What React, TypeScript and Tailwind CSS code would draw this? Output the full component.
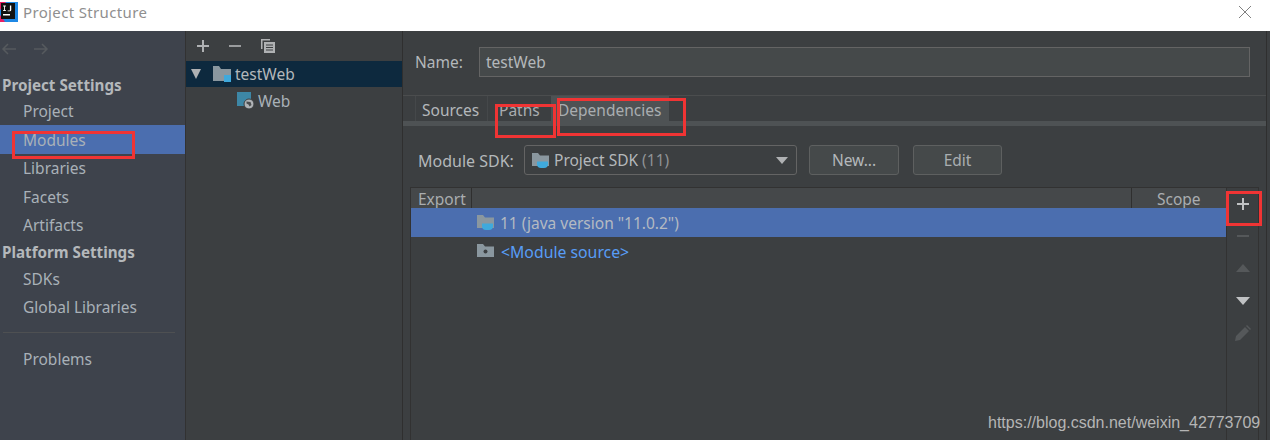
import React from 'react';

const font = { fontFamily: '"Noto Sans", "Open Sans", sans-serif' };

const FolderIcon = ({ cup, badge }: { cup?: boolean; badge?: boolean }) => (
  <svg width="20" height="19" viewBox="0 0 20 19" className="shrink-0">
    <path d="M1 2h6l2 2.500h9V15H1z" fill="#8a979f" />
    {cup && <path d="M6 10.500h11v2.500a4 4 0 0 1-4 4h-3a4 4 0 0 1-4-4z" fill="#3fa9dc" />}
    {badge && <circle cx="9.500" cy="9.500" r="2" fill="#3c3f41" />}
  </svg>
);

const SideItem = ({ label, active, first }: { label: string; active?: boolean; first?: boolean }) => (
  <div className={`h-[28.4px] pl-[23px] flex items-center text-[15.500px] text-[#a9b1b8] ${first ? '' : 'pt-[2px]'} ${active ? 'bg-[#4b6eaf]' : ''}`}>
    {label}
  </div>
);

const SideHeader = ({ label, short }: { label: string; short?: boolean }) => (
  <div className={`${short ? 'h-[25px]' : 'h-[26px]'} pl-[2px] pt-[2px] flex items-center text-[15.200px] font-bold text-[#b4b8bb]`}>{label}</div>
);

const RedBox = ({ className }: { className: string }) => (
  <div className={`absolute border-[3px] border-[#f03434] ${className}`} />
);

export default function App() {
  return (
    <div className="relative w-[1270px] h-[440px] overflow-hidden bg-white" style={font}>
      {/* title bar */}
      <div className="h-[31px] w-[1266px] flex items-center bg-white">
        <svg width="18" height="21" viewBox="0 0 18 21" className="shrink-0 -mt-[8px]">
          <rect x="0" y="1" width="18" height="20" fill="#1e88e5" />
          <path d="M0 1h6L0 9z" fill="#e91e63" />
          <path d="M0 14l5 7H0z" fill="#e91e63" />
          <rect x="1" y="2" width="14" height="16" fill="#111" />
          <rect x="3" y="13" width="7" height="1.500" fill="#fff" />
          <path d="M3 5h3v1H5v4h1v1H3v-1h1V6H3zM8 5h4v5a1.500 1.500 0 0 1-1.500 1.500H8v-1h2.500V5z" fill="#fff" transform="scale(0.9) translate(0.500 0)" />
        </svg>
        <span className="ml-[5px] -mt-[7px] text-[15px] tracking-[0.35px] text-[#8f8f8f]">Project Structure</span>
        <svg width="12" height="12" viewBox="0 0 12 12" className="ml-auto mr-[15px] -mt-[7px] text-[#808080]">
          <path d="M0 0l12 12M12 0L0 12" stroke="currentColor" strokeWidth="1" fill="none" />
        </svg>
      </div>

      <div className="flex h-[409px]">
        {/* left sidebar */}
        <div className="w-[185px] bg-[#3e434c] shrink-0 flex flex-col">
          <div className="h-[40px] pl-[1px] pt-[11px] flex gap-[16px] text-[#565a5e]">
            {[0, 1].map((i) => (
              <svg key={i} width="16" height="14" viewBox="0 0 16 14">
                <path d={i === 0 ? 'M15 7H2M7 2L2 7l5 5' : 'M1 7h13M9 2l5 5-5 5'} stroke="currentColor" strokeWidth="1.500" fill="none" />
              </svg>
            ))}
          </div>
          <SideHeader label="Project Settings" />
          <div>
            <SideItem label="Project" first />
            <SideItem label="Modules" active />
            <SideItem label="Libraries" />
            <SideItem label="Facets" />
            <SideItem label="Artifacts" />
          </div>
          <SideHeader label="Platform Settings" short />
          <div>
            <SideItem label="SDKs" />
            <SideItem label="Global Libraries" />
          </div>
          <div className="mt-[11px] ml-[3px] mr-[10px] h-px bg-[#4e5052]" />
          <div className="mt-[12px]">
            <SideItem label="Problems" />
          </div>
        </div>

        {/* module tree */}
        <div className="w-[217px] shrink-0 bg-[#3c3f41] border-l border-[#323232]">
          <div className="h-[30px] flex items-center pl-[10px] gap-[18px] text-[#afb1b3]">
            <svg width="14" height="14" viewBox="0 0 14 14">
              <path d="M7 1v12M1 7h12" stroke="currentColor" strokeWidth="2" />
            </svg>
            <svg width="14" height="14" viewBox="0 0 14 14">
              <path d="M1 7h12" stroke="#9a9c9e" strokeWidth="2" />
            </svg>
            <svg width="16" height="16" viewBox="0 0 16 16">
              <path d="M1 1h9v1.500H2.500V11H1z" fill="currentColor" />
              <path d="M4 4h11v11H4z" fill="currentColor" />
              <path d="M6 7h7M6 9.500h7M6 12h7" stroke="#3c3f41" strokeWidth="1" />
            </svg>
          </div>
          <div className="h-[26px] flex items-center bg-[#0d293e] text-[15.500px] text-[#b4b8bb]">
            <svg width="10" height="10" viewBox="0 0 10 10" className="ml-[5px]">
              <path d="M0 0h10L5 10z" fill="#afb1b3" />
            </svg>
            <svg width="19" height="17" viewBox="0 0 19 17" className="ml-[12px]">
              <path d="M0 0h6l2 3h10v12H0z" fill="#8a979f" />
              <rect x="11" y="9" width="7" height="7" fill="#3fa9dc" />
            </svg>
            <span className="ml-[3px] mt-[2px]">testWeb</span>
          </div>
          <div className="h-[27px] flex items-center text-[15.500px] text-[#a9b1b8]">
            <svg width="19" height="19" viewBox="0 0 19 19" className="ml-[50px]">
              <rect x="1" y="1" width="14" height="14" fill="#3d87a6" />
              <circle cx="13" cy="13" r="5" fill="#b0b3b6" stroke="#3c3f41" strokeWidth="1" />
              <path d="M10.500 10.500l4 .5 1 3-2 1.500-1-2-2-1z" fill="#4a4d4f" />
            </svg>
            <span className="ml-[3px] mt-[2px]">Web</span>
          </div>
        </div>

        {/* module details */}
        <div className="w-[864px] shrink-0 bg-[#3c3f41] border-l border-[#2f2f2f] flex flex-col">
          <div className="h-[64px] flex items-center pl-[12px] pr-[16px] pb-[2px]">
            <span className="w-[64px] mt-[2px] text-[15.500px] text-[#b4b8bb]">Name:</span>
            <div className="h-[30px] flex-1 bg-[#45494a] border border-[#646464] pl-[6px] pt-[2px] flex items-center text-[15.500px] text-[#b4b8bb]">
              testWeb
            </div>
          </div>
          <div className="h-[26px] border-t border-[#4b4d4e] flex items-stretch pl-[12px] pt-0 text-[15.500px] text-[#b4b8bb]">
            <div className="w-[73px] pl-[6px] pt-[4px] flex items-center border-x border-[#45484a]">Sources</div>
            <div className="w-[63px] pl-[11px] pt-[4px] flex items-center text-[#a9adb0]">Paths</div>
            <div className="w-[118px] pl-[7px] pt-[4px] flex items-center bg-[#4e5254] text-[#a9adb0]">Dependencies</div>
          </div>
          <div className="h-[5px] bg-[#4e5254]" />
          <div className="h-[61px] flex items-center pl-[15px] pt-[7px]">
            <span className="w-[106px] mt-[2px] text-[16px] text-[#b4b8bb]">Module SDK:</span>
            <div className="h-[30px] w-[273px] flex items-center pl-[6px] pr-[8px] bg-[#3c3f41] border border-[#646464] rounded-[3px] text-[15.500px] text-[#b4b8bb]">
              <FolderIcon cup />
              <span className="ml-[3px] mt-[2px]">Project SDK <span className="text-[#8f9396]">(11)</span></span>
              <svg width="12" height="7" viewBox="0 0 12 7" className="ml-auto">
                <path d="M0 0h12L6 7z" fill="#afb1b3" />
              </svg>
            </div>
            <div className="ml-[12px] h-[30px] w-[90px] pt-[2px] flex items-center justify-center bg-[#45494a] border border-[#5e6060] rounded-[3px] text-[15.500px] text-[#b4b8bb]">New...</div>
            <div className="ml-[14px] h-[30px] w-[89px] pt-[2px] flex items-center justify-center bg-[#45494a] border border-[#5e6060] rounded-[3px] text-[15.500px] text-[#a9adb0]">Edit</div>
          </div>

          <div className="flex-1 flex ml-[7px] mr-[7px] border border-b-0 border-[#323232]">
            {/* dependency table */}
            <div className="w-[815px] shrink-0 flex flex-col">
              <div className="h-[20px] flex bg-[#45484a] text-[15.500px] text-[#a9adb0]">
                <div className="w-[61px] pl-[7px] pt-[3px] flex items-center border-r border-[#2f2f2f]">Export</div>
                <div className="w-[660px] border-r border-[#2f2f2f]" />
                <div className="flex-1 pl-[25px] pt-[3px] flex items-center">Scope</div>
              </div>
              <div className="h-[29px] flex items-center bg-[#4b6eaf] pl-[65px] text-[15.500px] text-[#b4bac2]">
                <FolderIcon cup />
                <span className="ml-[4px] mt-[3px]">11 (java version "11.0.2")</span>
              </div>
              <div className="h-[29px] flex items-center pl-[65px] text-[15.800px] text-[#589df6]">
                <FolderIcon badge />
                <span className="ml-[5px] mt-[2px]">&lt;Module source&gt;</span>
              </div>
            </div>
            {/* side toolbar */}
            <div className="flex-1 border-l border-[#323232] flex flex-col items-center">
              <svg width="14" height="14" viewBox="0 0 14 14" className="mt-[9px]">
                <path d="M7 1v12M1 7h12" stroke="#c0c2c4" strokeWidth="2" />
              </svg>
              <svg width="14" height="4" viewBox="0 0 14 4" className="mt-[23px]">
                <path d="M1 2h12" stroke="#55585a" strokeWidth="2" />
              </svg>
              <svg width="14" height="9" viewBox="0 0 14 9" className="mt-[26px]">
                <path d="M7 0l7 8H0z" fill="#55585a" />
              </svg>
              <svg width="14" height="8" viewBox="0 0 14 8" className="mt-[24px]">
                <path d="M0 0h14L7 8z" fill="#c0c2c4" />
              </svg>
              <svg width="17" height="17" viewBox="0 0 17 17" className="mt-[20px]">
                <path d="M1 16l1-5L11 2l4 4-9 9zM12 1l1-1 4 4-1 1z" fill="#55585a" />
              </svg>
            </div>
          </div>
        </div>

        <div className="w-[4px] bg-[#3c3f41] border-l border-[#2f2f2f]" />
      </div>

      {/* red annotations */}
      <RedBox className="left-[12px] top-[131px] w-[123px] h-[28px]" />
      <RedBox className="left-[495px] top-[104px] w-[61px] h-[34px]" />
      <RedBox className="left-[557px] top-[98px] w-[129px] h-[38px]" />
      <RedBox className="left-[1226px] top-[191px] w-[36px] h-[35px]" />

      {/* watermark */}
      <div className="absolute left-[988px] top-[411px] text-[16px] text-[#b5b5b5]" style={{ fontFamily: '"Liberation Sans", sans-serif' }}>
        https://blog.csdn.net/weixin_42773709
      </div>
    </div>
  );
}
